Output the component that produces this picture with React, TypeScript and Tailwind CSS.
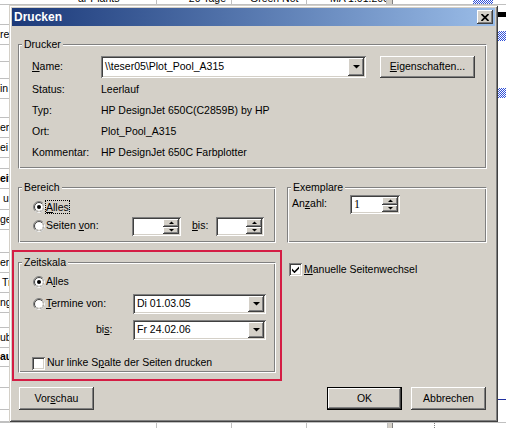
import React from "react";

// classic win2k bevels
const raised =
  "shadow-[inset_-1px_-1px_#404040,inset_1px_1px_#ffffff,inset_-2px_-2px_#808080,inset_2px_2px_#d4d0c8]";
const sunken =
  "shadow-[inset_1px_1px_#808080,inset_-1px_-1px_#ffffff,inset_2px_2px_#404040,inset_-2px_-2px_#d4d0c8]";
const etched =
  "border border-t-[#808080] border-l-[#808080] border-r-white border-b-white shadow-[inset_1px_1px_#ffffff,inset_-1px_-1px_#808080]";
const legend = "ml-[3px] px-[2px] bg-[#d4d0c8] leading-[12px]";

const leftRows = [
  { h: "h-[20px]", t: "" },
  { h: "h-[20px]", t: "re" },
  { h: "h-[17px]", t: "" },
  { h: "h-[17px]", t: "" },
  { h: "h-[20px]", t: "in" },
  { h: "h-[19px]", t: "" },
  { h: "h-[20px]", t: "en" },
  { h: "h-[20px]", t: "ei" },
  { h: "h-[11px]", t: "" },
  { h: "h-[20px]", t: "eit", b: true },
  { h: "h-[21px]", t: "u", pl: "pl-[3px]" },
  { h: "h-[20px]", t: "ge" },
  { h: "h-[23px]", t: "" },
  { h: "h-[20px]", t: "er" },
  { h: "h-[20px]", t: "Tr", pl: "pl-[2px]" },
  { h: "h-[20px]", t: "ng" },
  { h: "h-[15px]", t: "" },
  { h: "h-[20px]", t: "ub" },
  { h: "h-[19px]", t: "au", b: true },
  { h: "h-[21px]", t: "" },
  { h: "h-[22px]", t: "" },
  { h: "h-[12px]", t: "" },
];

const checker =
  "bg-[repeating-conic-gradient(#2f4fd8_0_25%,#ffffff_0_50%)] bg-[length:2px_2px]";

function Sheet() {
  return (
    <div className="flex flex-col w-full h-full">
      {/* top row, mostly cut off */}
      <div className="flex h-[5px] overflow-hidden border-b border-[#c0c0c0]">
        <div className="w-[157px] border-r border-[#c0c0c0] pl-[78px]">
          <div className="-mt-[8px] leading-[13px] whitespace-nowrap">ar Plants</div>
        </div>
        <div className="w-[75px] border-r border-[#c0c0c0] flex justify-end pr-[5px]">
          <div className="-mt-[8px] leading-[13px] whitespace-nowrap">20 Tage</div>
        </div>
        <div className="w-[75px] border-r border-[#c0c0c0] pl-[18px]">
          <div className="-mt-[8px] leading-[13px] whitespace-nowrap">Green Not</div>
        </div>
        <div className="w-[80px] border-r border-[#c0c0c0] pl-[23px] overflow-hidden">
          <div className="-mt-[8px] leading-[13px] whitespace-nowrap">MA 1.01.2006</div>
        </div>
        <div className="w-[6px] border-r border-[#808080] bg-[#d4d0c8]" />
        <div className="flex-1 pl-[80px]">
          <div className={`w-[20px] h-[4px] ${checker}`} />
        </div>
      </div>

      <div className="flex flex-1">
        <div className="w-[60px] flex flex-col">
          {leftRows.map((r, i) => (
            <div
              key={i}
              className={`${r.h} ${r.pl ?? ""} border-b border-[#c0c0c0] flex items-center whitespace-nowrap ${r.b ? "font-bold" : ""}`}
            >
              {r.t}
            </div>
          ))}
        </div>
        <div className="flex-1" />
        <div className="w-[8px] flex flex-col">
          <div className="mt-[7px] h-[5px] bg-black" />
          <div className={`mt-[14px] h-[10px] ${checker}`} />
          <div className={`mt-[47px] h-[10px] ${checker}`} />
          <div className="mt-[301px] h-[1px] bg-[#2030a0]" />
        </div>
      </div>

      {/* bottom row */}
      <div className="flex h-[6px] border-t border-[#c0c0c0]">
        <div className="w-[157px] border-r border-[#c0c0c0]" />
        <div className="w-[75px] border-r border-[#c0c0c0]" />
        <div className="w-[75px] border-r border-[#c0c0c0]" />
        <div className="w-[81px] border-r border-[#c0c0c0]" />
        <div className="w-[5px] border-r border-[#808080] bg-[#d4d0c8]" />
        <div className="w-[42px] border-r border-dotted border-[#808080]" />
      </div>
    </div>
  );
}

function Down() {
  return (
    <svg width="7" height="4" viewBox="0 0 7 4">
      <path d="M0 0h7L3.5 3.5z" fill="#000" />
    </svg>
  );
}

function SmallUp() {
  return (
    <svg width="5" height="3" viewBox="0 0 5 3">
      <path d="M0 3h5L2.5 0.5z" fill="#000" />
    </svg>
  );
}

function SmallDown() {
  return (
    <svg width="5" height="3" viewBox="0 0 5 3">
      <path d="M0 0h5L2.5 2.5z" fill="#000" />
    </svg>
  );
}

function Radio({ on }: { on?: boolean }) {
  return (
    <svg width="12" height="12" viewBox="0 0 12 12" className="shrink-0">
      <circle cx="6" cy="6" r="5.5" fill="none" stroke="#808080" />
      <path d="M9.89 2.11A5.5 5.5 0 0 1 2.11 9.89" fill="none" stroke="#ffffff" />
      <circle cx="6" cy="6" r="4.5" fill="#ffffff" stroke="#404040" />
      <path d="M9.18 2.82A4.5 4.5 0 0 1 2.82 9.18" fill="none" stroke="#d4d0c8" />
      {on && <circle cx="6" cy="6" r="2" fill="#000" />}
    </svg>
  );
}

function Check({ on }: { on?: boolean }) {
  return (
    <div className={`w-[13px] h-[13px] shrink-0 bg-white ${sunken} flex items-center justify-center`}>
      {on && (
        <svg width="7" height="7" viewBox="0 0 7 7">
          <path d="M0 2.5L2.5 5L7 0.5V2.7L2.5 7.2L0 4.7z" fill="#000" />
        </svg>
      )}
    </div>
  );
}

function Combo({ value, w, h }: { value: string; w: string; h: string }) {
  return (
    <div className={`${w} ${h} bg-white ${sunken} flex p-[2px] shrink-0`}>
      <span className="flex-1 flex items-center pl-[2px] whitespace-nowrap overflow-hidden">{value}</span>
      <div className={`w-[16px] bg-[#d4d0c8] ${raised} flex items-center justify-center`}>
        <Down />
      </div>
    </div>
  );
}

function Spin({ w, value }: { w: string; value?: string }) {
  return (
    <div className={`${w} h-[19px] bg-white ${sunken} flex p-[2px] shrink-0`}>
      <span className="flex-1 flex items-center pl-[2px] font-['Liberation_Serif',serif] text-[12px]">{value}</span>
      <div className="w-[16px] flex flex-col">
        <div className={`h-[8px] bg-[#d4d0c8] ${raised} flex items-center justify-center`}>
          <SmallUp />
        </div>
        <div className={`h-[7px] bg-[#d4d0c8] ${raised} flex items-center justify-center`}>
          <SmallDown />
        </div>
      </div>
    </div>
  );
}

function Btn({ children, def, w, h }: { children: React.ReactNode; def?: boolean; w: string; h: string }) {
  if (def)
    return (
      <div className={`${w} ${h} border border-black flex`}>
        <div className={`flex-1 bg-[#d4d0c8] ${raised} flex items-center justify-center`}>{children}</div>
      </div>
    );
  return <div className={`${w} ${h} bg-[#d4d0c8] ${raised} flex items-center justify-center`}>{children}</div>;
}

function InfoRow({ label, value }: { label: string; value: string }) {
  return (
    <div className="h-[21px] flex items-center whitespace-nowrap">
      <span className="w-[69px]">{label}</span>
      <span>{value}</span>
    </div>
  );
}

export default function App() {
  return (
    <div className="relative w-[506px] h-[428px] overflow-hidden bg-white text-black font-['Liberation_Sans',Arial,sans-serif] text-[10.5px]">
      <Sheet />

      {/* Drucken dialog */}
      <div className="absolute left-[9px] top-[5px] w-[489px] h-[417px] bg-[#d4d0c8] p-[3px] flex flex-col shadow-[inset_1px_1px_#d4d0c8,inset_-1px_-1px_#404040,inset_2px_2px_#ffffff,inset_-2px_-2px_#808080]">
        <div className="h-[18px] bg-gradient-to-r from-[#1c3979] to-[#9bbde8] flex items-center justify-between pl-[2px] pr-[2px]">
          <span className="text-white font-bold text-[12px]">Drucken</span>
          <div className={`w-[16px] h-[14px] bg-[#d4d0c8] ${raised} flex items-center justify-center`}>
            <svg width="8" height="7" viewBox="0 0 8 7">
              <path d="M0.5 0L7.5 7M7.5 0L0.5 7" stroke="#000" strokeWidth="1.7" />
            </svg>
          </div>
        </div>

        <div className="flex flex-col pl-[6px] pr-[8px] mt-[12px]">
          <fieldset className={`${etched} pb-[5px]`}>
            <legend className={legend}>Drucker</legend>
            <div className="pl-[13px] pt-[6px]">
              <div className="h-[22px] flex items-center">
                <span className="w-[69px]">
                  <u>N</u>ame:
                </span>
                <Combo value={"\\\\teser05\\Plot_Pool_A315"} w="w-[265px]" h="h-[22px]" />
                <div className="ml-[14px]">
                  <Btn w="w-[95px]" h="h-[22px]">
                    <span>
                      <u>E</u>igenschaften...
                    </span>
                  </Btn>
                </div>
              </div>
              <div className="mt-[1px]">
                <InfoRow label="Status:" value="Leerlauf" />
                <InfoRow label="Typ:" value="HP DesignJet 650C(C2859B) by HP" />
                <InfoRow label="Ort:" value="Plot_Pool_A315" />
                <InfoRow label="Kommentar:" value="HP DesignJet 650C Farbplotter" />
              </div>
            </div>
          </fieldset>

          <div className="flex gap-[11px] mt-[12px]">
            <fieldset className={`${etched} w-[258px] pb-[6px]`}>
              <legend className={legend}>Bereich</legend>
              <div className="pl-[14px] pt-[5px]">
                <div className="h-[18px] flex items-center">
                  <Radio on />
                  <span className="border border-dotted border-black leading-[12px] px-[0px]">
                    <u>A</u>lles
                  </span>
                </div>
                <div className="h-[20px] flex items-center">
                  <Radio />
                  <span className="w-[87px] pl-[1px]">
                    Seiten <u>v</u>on:
                  </span>
                  <Spin w="w-[49px]" />
                  <span className="w-[24px] ml-[11px]">
                    <u>b</u>is:
                  </span>
                  <Spin w="w-[48px]" />
                </div>
              </div>
            </fieldset>

            <fieldset className={`${etched} w-[200px]`}>
              <legend className={legend}>Exemplare</legend>
              <div className="pl-[4px] pt-[2px] h-[20px] flex items-center">
                <span className="w-[58px]">
                  An<u>z</u>ahl:
                </span>
                <Spin w="w-[50px]" value="1" />
              </div>
            </fieldset>
          </div>

          <div className="flex gap-[11px] mt-[7px]">
            <div className="w-[258px]">
              <div className="-mx-[6px] border-2 border-[#d41d44] px-[4px] pt-[4px] pb-[6px]">
                <fieldset className={`${etched} pb-[2px]`}>
                  <legend className={legend}>Zeitskala</legend>
                  <div className="pl-[14px]">
                    <div className="mt-[5px] h-[18px] flex items-center">
                      <Radio on />
                      <span className="pl-[1px]">
                        A<u>l</u>les
                      </span>
                    </div>
                    <div className="mt-[3px] h-[20px] flex items-center">
                      <Radio />
                      <span className="w-[88px] pl-[1px]">
                        <u>T</u>ermine von:
                      </span>
                      <Combo value="Di 01.03.05" w="w-[133px]" h="h-[20px]" />
                    </div>
                    <div className="mt-[6px] h-[20px] flex items-center">
                      <span className="w-[100px] pl-[63px]">
                        bi<u>s</u>:
                      </span>
                      <Combo value="Fr 24.02.06" w="w-[133px]" h="h-[20px]" />
                    </div>
                    <div className="mt-[16px] h-[14px] flex items-center -ml-[1px]">
                      <Check />
                      <span className="ml-[2px]">
                        Nur linke S<u>p</u>alte der Seiten drucken
                      </span>
                    </div>
                  </div>
                </fieldset>
              </div>
            </div>

            <div className="w-[200px] pt-[13px] pl-[2px]">
              <div className="h-[13px] flex items-center">
                <Check on />
                <span className="ml-[2px]">
                  <u>M</u>anuelle Seitenwechsel
                </span>
              </div>
            </div>
          </div>

          <div className="flex justify-between mt-[6px]">
            <div className="ml-[1px]">
              <Btn w="w-[75px]" h="h-[23px]">
                <span>
                  Vor<u>s</u>chau
                </span>
              </Btn>
            </div>
            <div className="flex gap-[9px] mr-[1px]">
              <Btn def w="w-[75px]" h="h-[23px]">
                OK
              </Btn>
              <Btn w="w-[75px]" h="h-[23px]">
                Abbrechen
              </Btn>
            </div>
          </div>
        </div>
      </div>
    </div>
  );
}
